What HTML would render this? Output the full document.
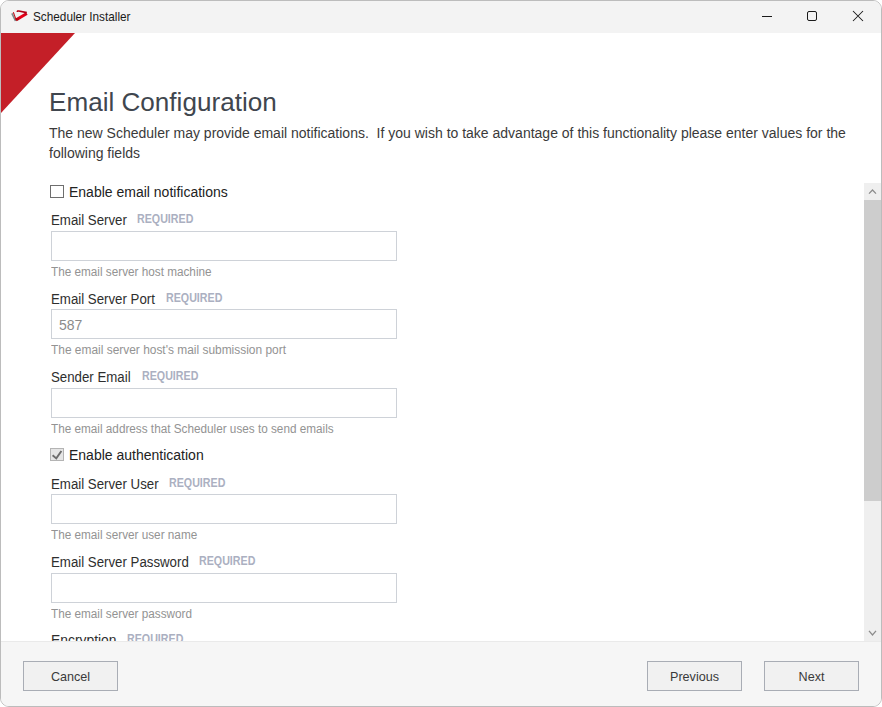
<!DOCTYPE html>
<html><head><meta charset="utf-8">
<style>
html,body{margin:0;padding:0;width:882px;height:707px;overflow:hidden;background:#ffffff;}
*{box-sizing:border-box;}
body{font-family:"Liberation Sans",sans-serif;position:relative;}
.abs{position:absolute;white-space:pre;}
#win{position:absolute;left:0;top:0;width:882px;height:707px;border:1px solid #bcbcbc;border-radius:9px;overflow:hidden;background:#fff;}
#title{position:absolute;left:0;top:0;width:880px;height:32px;background:#f3f3f3;}
#footer{position:absolute;left:0;top:640px;width:880px;height:65px;background:#f6f6f6;border-top:1px solid #eaeaea;}
.lbl{position:absolute;left:50px;font-size:14px;color:#2e2e2e;white-space:pre;transform:scaleX(0.947);transform-origin:0 0;}
.req{position:absolute;font-size:12px;font-weight:bold;color:#abb0c1;white-space:pre;transform:scaleX(0.89);transform-origin:0 0;}
.box{position:absolute;left:50px;width:346px;height:30px;border:1px solid #ced2d8;background:#fff;}
.help{position:absolute;left:50px;font-size:12.3px;color:#939393;white-space:pre;transform:scaleX(0.955);transform-origin:0 0;}
.btn{position:absolute;top:19px;width:95px;height:30px;border:1px solid #a9adb5;background:#f1f1f1;font-size:12.6px;color:#3a3a3a;text-align:center;line-height:31px;}
.chk{position:absolute;left:49px;width:14px;height:13px;border:1px solid #6e6e6e;background:#fff;}
</style></head><body>
<div id="win">
  <div id="title">
    <svg style="position:absolute;left:0;top:0" width="40" height="32" viewBox="1 1 40 32">
      <defs><linearGradient id="rg" x1="0" y1="1" x2="1" y2="0"><stop offset="0" stop-color="#b0000c"/><stop offset="0.5" stop-color="#f00018"/><stop offset="1" stop-color="#c8001a"/></linearGradient></defs>
      <path d="M11.9 13.4 L15.5 21" stroke="#7a8a8b" stroke-width="1.6" fill="none"/>
      <path d="M13.3 12.3 L16.3 20.4" stroke="#c0101c" stroke-width="1.1" fill="none"/>
      <path d="M15.9 20 L26.8 13.5" stroke="url(#rg)" stroke-width="3.2" fill="none"/>
      <path d="M17.3 12 C17.3 11 17.8 10.8 18.8 11 L26.8 12.6" stroke="#b00014" stroke-width="1.6" fill="none"/>
    </svg>
    <div class="abs" style="left:32px;top:8px;font-size:12.8px;color:#1a1a1a;transform:scaleX(0.92);transform-origin:0 0;">Scheduler Installer</div>
    <svg style="position:absolute;left:740px;top:0" width="140" height="32" viewBox="0 0 140 32">
      <rect x="21" y="15" width="10" height="1" fill="#1a1a1a"/>
      <rect x="66.5" y="10.5" width="9" height="9" rx="1.5" fill="none" stroke="#1a1a1a" stroke-width="1"/>
      <path d="M112 10 L122 20 M122 10 L112 20" stroke="#1a1a1a" stroke-width="1.05"/>
    </svg>
  </div>
  <svg style="position:absolute;left:0;top:32px" width="80" height="82"><polygon points="0,0 74,0 0,80" fill="#c41f28"/></svg>
  <div class="abs" style="left:48px;top:86px;font-size:26.1px;color:#40464e;">Email Configuration</div>
  <div class="abs" style="left:48px;top:122px;font-size:14px;color:#3a3a3a;line-height:20px;">The new Scheduler may provide email notifications.  If you wish to take advantage of this functionality please enter values for the
following fields</div>

  <div class="chk" style="top:184px;"></div>
  <div class="abs" style="left:68px;top:183px;font-size:14px;color:#222;">Enable email notifications</div>

  <div class="lbl" style="top:211px;">Email Server</div>
  <div class="req" style="left:136px;top:211px;">REQUIRED</div>
  <div class="box" style="top:230px;"></div>
  <div class="help" style="top:264px;">The email server host machine</div>

  <div class="lbl" style="top:290px;">Email Server Port</div>
  <div class="req" style="left:165px;top:290px;">REQUIRED</div>
  <div class="box" style="top:308px;"></div>
  <div class="abs" style="left:58px;top:316px;font-size:14px;color:#8b8b8b;">587</div>
  <div class="help" style="top:342px;transform:scaleX(0.97)">The email server host's mail submission port</div>

  <div class="lbl" style="top:368px;">Sender Email</div>
  <div class="req" style="left:141px;top:368px;">REQUIRED</div>
  <div class="box" style="top:387px;"></div>
  <div class="help" style="top:421px;">The email address that Scheduler uses to send emails</div>

  <div class="chk" style="top:447px;border-color:#b4b4b4;background:#e5e5e5;"></div>
  <svg style="position:absolute;left:0;top:0;" width="882" height="707" viewBox="1 1 882 707">
    <path d="M52.6 455.2 L56.3 458.4 L61.4 451" fill="none" stroke="#6c6c6c" stroke-width="1.9" stroke-linecap="butt" stroke-linejoin="miter"/>
  </svg>
  <div class="abs" style="left:68px;top:446px;font-size:14px;color:#222;">Enable authentication</div>

  <div class="lbl" style="top:475px;">Email Server User</div>
  <div class="req" style="left:168px;top:475px;">REQUIRED</div>
  <div class="box" style="top:493px;"></div>
  <div class="help" style="top:527px;">The email server user name</div>

  <div class="lbl" style="top:553px;">Email Server Password</div>
  <div class="req" style="left:198px;top:553px;">REQUIRED</div>
  <div class="box" style="top:572px;"></div>
  <div class="help" style="top:606px;">The email server password</div>

  <div class="lbl" style="top:631px;transform:scaleX(0.99)">Encryption</div>
  <div class="req" style="left:126px;top:631px;">REQUIRED</div>

  <!-- scrollbar -->
  <div style="position:absolute;left:863px;top:182px;width:17px;height:458px;background:#efefef;"></div>
  <div style="position:absolute;left:863px;top:199px;width:17px;height:301px;background:#cdcdcd;"></div>
  <svg style="position:absolute;left:0;top:0;" width="882" height="707" viewBox="1 1 882 707">
    <path d="M869 193.6 L872.5 190 L876 193.6" fill="none" stroke="#8c8c8c" stroke-width="1.3"/>
    <path d="M869 630.8 L872.5 634.9 L876 630.8" fill="none" stroke="#8c8c8c" stroke-width="1.3"/>
  </svg>

  <div id="footer">
    <div class="btn" style="left:22px;">Cancel</div>
    <div class="btn" style="left:646px;">Previous</div>
    <div class="btn" style="left:763px;">Next</div>
  </div>
</div>
</body></html>
